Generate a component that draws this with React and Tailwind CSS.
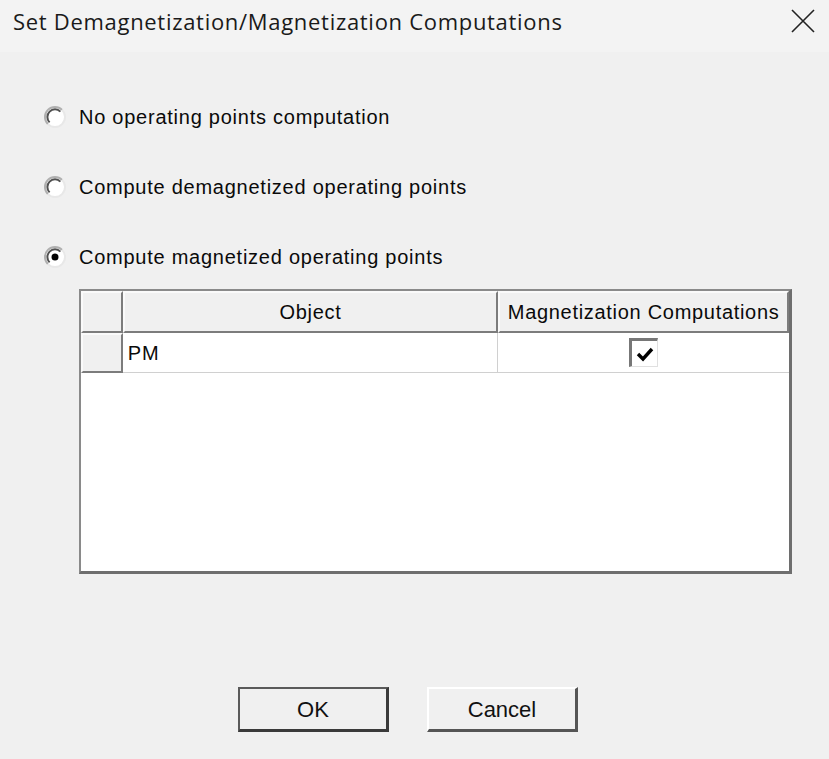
import React from "react";

function Radio({ checked }) {
  return (
    <svg width="24" height="24" viewBox="0 0 24 24" className="shrink-0">
      <circle cx="12" cy="12" r="10" fill="#ffffff" />
      <path d="M4.9 19.1 A10 10 0 0 1 19.1 4.9" fill="none" stroke="#b0b0b0" strokeWidth="2" />
      <path d="M6.6 17.4 A7.6 7.6 0 0 1 17.4 6.6" fill="none" stroke="#505050" strokeWidth="2" />
      <path d="M19.1 4.9 A10 10 0 0 1 4.9 19.1" fill="none" stroke="#e8e8e8" strokeWidth="2" />
      {checked && <circle cx="12" cy="12" r="3.5" fill="#000" />}
    </svg>
  );
}

function RadioRow({ checked, label }) {
  return (
    <div className="flex items-center h-[30px]">
      <div className="pl-[43px] w-[79px] flex items-center">
        <Radio checked={checked} />
      </div>
      <span className="text-[20px] tracking-[0.75px] text-[#0a0a0a]">{label}</span>
    </div>
  );
}

const HeadCell = ({ className = "", children }) => (
  <div
    className={
      "bg-[#f0f0f0] border-t-2 border-l-2 border-t-[#fafafa] border-l-[#fafafa] border-r-2 border-b-2 border-r-[#7c7c7c] border-b-[#7c7c7c] flex items-center justify-center text-[20px] tracking-[0.7px] text-[#0a0a0a] " +
      className
    }
  >
    {children}
  </div>
);

export default function App() {
  return (
    <div
      className="w-[829px] h-[759px] bg-[#f0f0f0] flex flex-col overflow-hidden"
      style={{ fontFamily: '"Liberation Sans", Arial, sans-serif' }}
    >
      <div className="h-[52px] bg-[#f3f3f3] flex items-start justify-between pl-[13px] pr-[14px] pt-[5px]">
        <span
          className="text-[22px] tracking-[0.7px] text-[#1a1a1a]"
          style={{ fontFamily: '"Open Sans", "Noto Sans", sans-serif' }}
        >
          Set Demagnetization/Magnetization Computations
        </span>
        <svg width="24" height="24" viewBox="0 0 24 24" className="mt-[4px]">
          <path d="M1 1 L23 23 M23 1 L1 23" stroke="#222" strokeWidth="1.6" />
        </svg>
      </div>

      <div className="flex flex-col gap-[40px] mt-[50px]">
        <RadioRow label="No operating points computation" />
        <RadioRow label="Compute demagnetized operating points" />
        <RadioRow checked label="Compute magnetized operating points" />
      </div>

      <div className="ml-[79px] mt-[17px] w-[713px] h-[285px] bg-white border-2 border-[#8a8a8a] border-r-[3px] border-b-[3px] border-r-[#6e6e6e] border-b-[#6e6e6e] flex flex-col">
        <div className="flex h-[42px]">
          <HeadCell className="w-[42px]" />
          <HeadCell className="w-[377px]">Object</HeadCell>
          <HeadCell className="w-[292px] whitespace-nowrap">Magnetization Computations</HeadCell>
        </div>
        <div className="flex h-[40px]">
          <HeadCell className="w-[42px]" />
          <div className="w-[377px] border-r border-b border-[#d0d0d0] flex items-center pl-[5px] text-[20px] tracking-[0.7px] text-[#0a0a0a]">
            PM
          </div>
          <div className="w-[292px] border-b border-[#d0d0d0] flex items-center justify-center">
            <div className="w-[29px] h-[29px] bg-white border-t-[3px] border-l-[3px] border-t-[#777] border-l-[#777] border-r border-b border-r-[#e0e0e0] border-b-[#e0e0e0] flex items-center justify-center">
              <svg width="18" height="16" viewBox="0 0 18 16">
                <path d="M2 8 L7 13 L16 3" fill="none" stroke="#000" strokeWidth="3.4" />
              </svg>
            </div>
          </div>
        </div>
        <div className="flex-1" />
      </div>

      <div className="flex mt-[113px] ml-[238px] gap-[38px]">
        <button className="w-[151px] h-[45px] bg-[#f0f0f0] border-2 border-[#5a5a5a] border-r-[3px] border-b-[3px] border-r-[#3a3a3a] border-b-[#3a3a3a] text-[22px] text-[#111] flex items-center justify-center">
          OK
        </button>
        <button className="w-[151px] h-[45px] bg-[#f0f0f0] border-t-2 border-l-2 border-t-white border-l-white border-r-[3px] border-b-[3px] border-r-[#555] border-b-[#555] text-[22px] text-[#111] flex items-center justify-center">
          Cancel
        </button>
      </div>
    </div>
  );
}
